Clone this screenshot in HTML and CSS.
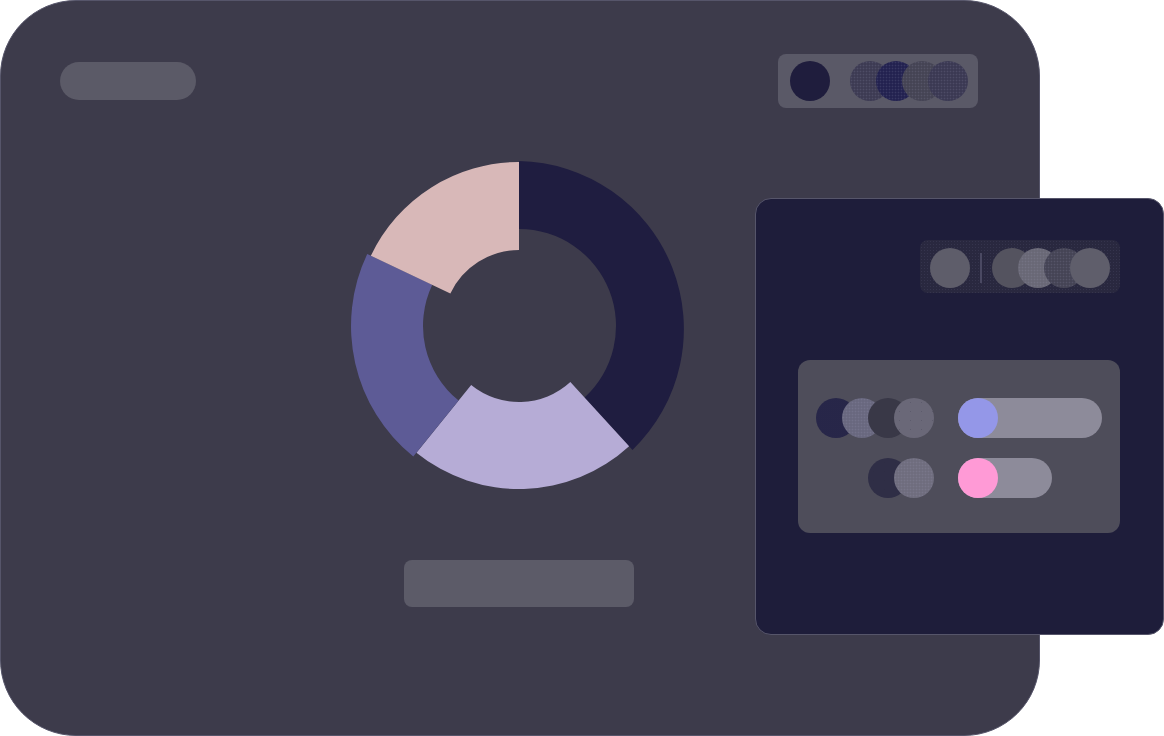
FILE: index.html
```html
<!DOCTYPE html>
<html lang="en">
<head>
<meta charset="utf-8">
<title>Dashboard</title>
<link rel="stylesheet" href="styles.css">
</head>
<body>
<div class="stage">
  <div class="window main">
    <div class="header">
      <div class="pill"></div>
      <div class="toolbar">
        <span class="dot solid-navy"></span>
        <div class="stack">
          <span class="dot c-a dotted"></span>
          <span class="dot c-b dotted"></span>
          <span class="dot c-c dotted"></span>
          <span class="dot c-d dotted"></span>
        </div>
      </div>
    </div>
    <div class="chart">
      <svg width="340" height="340" viewBox="0 0 340 340">
        <path class="seg-navy" d="M170 5 A168 168 0 0 1 283.5 293.9 L235.53 241.52 A97 97 0 0 0 170 73 Z"/>
        <path class="seg-lav" d="M280.12 290.18 A163 163 0 0 1 67.42 296.67 L122.17 229.06 A76 76 0 0 0 221.35 226.03 Z"/>
        <path class="seg-blue" d="M64.28 300.55 A168 168 0 0 1 18.25 97.94 L83.28 128.83 A96 96 0 0 0 109.59 244.60 Z"/>
        <path class="seg-pink" d="M21.86 99.66 A164 164 0 0 1 170 6 L170 94 A76 76 0 0 0 101.35 137.40 Z"/>
      </svg>
    </div>
    <div class="footer-bar"></div>
  </div>

  <div class="window side">
    <div class="side-top">
      <div class="toolbar2">
        <span class="dot s-solid"></span>
        <span class="divider"></span>
        <div class="stack">
          <span class="dot s-a"></span>
          <span class="dot s-b dotted"></span>
          <span class="dot s-c dotted"></span>
          <span class="dot s-d"></span>
        </div>
      </div>
    </div>
    <div class="settings">
      <div class="stack right">
        <span class="dot p-a dotted-dark"></span>
        <span class="dot p-b dotted"></span>
        <span class="dot p-c"></span>
        <span class="dot p-d sparse"></span>
      </div>
      <div class="toggle long"><span class="knob knob-blue"></span></div>
      <div class="stack right">
        <span class="dot p-e sparse"></span>
        <span class="dot p-f dotted"></span>
      </div>
      <div class="toggle short"><span class="knob knob-pink"></span></div>
    </div>
  </div>
</div>
</body>
</html>
```

FILE: styles.css
```css
html, body {
  margin: 0;
  padding: 0;
  background: #ffffff;
  font-family: "Liberation Sans", Arial, sans-serif;
}

.stage {
  position: relative;
  width: 1164px;
  height: 736px;
  overflow: hidden;
}

.window {
  box-sizing: border-box;
  border: 1px solid #56556a;
}

.main {
  width: 1040px;
  height: 736px;
  border-radius: 76px;
  background: #3d3b4b;
  padding: 53px 61px 0 59px;
  display: flex;
  flex-direction: column;
  align-items: center;
}

.header {
  width: 100%;
  display: flex;
  justify-content: space-between;
  align-items: center;
}

.pill {
  width: 136px;
  height: 38px;
  border-radius: 19px;
  background: #5b5a67;
}

.toolbar {
  width: 200px;
  height: 54px;
  box-sizing: border-box;
  border-radius: 8px;
  background: #5a5967;
  display: flex;
  align-items: center;
  padding: 0 10px 0 12px;
  gap: 20px;
}

.dot {
  display: block;
  width: 40px;
  height: 40px;
  border-radius: 50%;
  flex: none;
}

.stack {
  display: flex;
  align-items: center;
}

.stack .dot + .dot {
  margin-left: -14px;
}

.dotted {
  background-image: radial-gradient(circle, rgba(170, 170, 200, 0.16) 0.7px, transparent 1.1px);
  background-size: 3px 3px;
}

.dotted-dark {
  background-image: radial-gradient(circle, rgba(70, 70, 120, 0.3) 0.6px, transparent 1px);
  background-size: 2px 2px;
}

.sparse {
  background-image: radial-gradient(circle, rgba(40, 40, 60, 0.2) 0.6px, transparent 1px);
  background-size: 11px 9px;
}

.solid-navy { background-color: #1f1d3d; }
.c-a { background-color: #3d3b53; }
.c-b { background-color: #232250; }
.c-c { background-color: #454454; }
.c-d { background-color: #3b3953; }

.chart {
  margin-top: 48px;
  width: 340px;
  height: 340px;
}

.chart svg {
  display: block;
}

.seg-navy { fill: #1f1d40; }
.seg-lav { fill: #b6acd6; }
.seg-blue { fill: #5d5b96; }
.seg-pink { fill: #d8b8b8; }

.footer-bar {
  margin-top: 64px;
  width: 230px;
  height: 47px;
  border-radius: 8px;
  background: #5c5b68;
}

/* side window */
.side {
  position: absolute;
  left: 755px;
  top: 198px;
  width: 409px;
  height: 437px;
  border-radius: 16px;
  background: #1e1d3a;
  padding: 41px 43px 0 42px;
  display: flex;
  flex-direction: column;
}

.side-top {
  display: flex;
  justify-content: flex-end;
}

.toolbar2 {
  width: 200px;
  height: 53px;
  box-sizing: border-box;
  border-radius: 8px;
  background-color: #29283f;
  background-image: radial-gradient(circle, rgba(90, 90, 120, 0.25) 0.6px, transparent 1px);
  background-size: 3px 3px;
  display: flex;
  align-items: center;
  padding: 2px 10px 0 10px;
}

.divider {
  width: 2px;
  height: 30px;
  background: #4a4962;
  margin: 0 10px;
  flex: none;
}

.s-solid { background-color: #5e5d6a; }
.s-a { background-color: #54535f; }
.s-b { background-color: #696876; }
.s-c { background-color: #454455; }
.s-d { background-color: #5f5e6b; }

.settings {
  margin-top: 67px;
  height: 173px;
  box-sizing: border-box;
  border-radius: 12px;
  background: #4e4d5a;
  padding: 38px 18px 0 18px;
  display: grid;
  grid-template-columns: 118px 1fr;
  column-gap: 24px;
  row-gap: 20px;
  align-content: start;
}

.stack.right {
  justify-content: flex-end;
}

.p-a { background-color: #1f1e3b; }
.p-b { background-color: #69687f; }
.p-c { background-color: #393847; }
.p-d { background-color: #6a6878; }
.p-e { background-color: #2f2e46; }
.p-f { background-color: #6f6d7e; }

.toggle {
  height: 40px;
  border-radius: 20px;
  background: #8d8b9a;
  display: flex;
  align-items: center;
}

.toggle.long { width: 144px; }
.toggle.short { width: 94px; }

.knob {
  width: 40px;
  height: 40px;
  border-radius: 50%;
}

.knob-blue { background: #9497e8; }
.knob-pink { background: #ff9ad6; }
```
